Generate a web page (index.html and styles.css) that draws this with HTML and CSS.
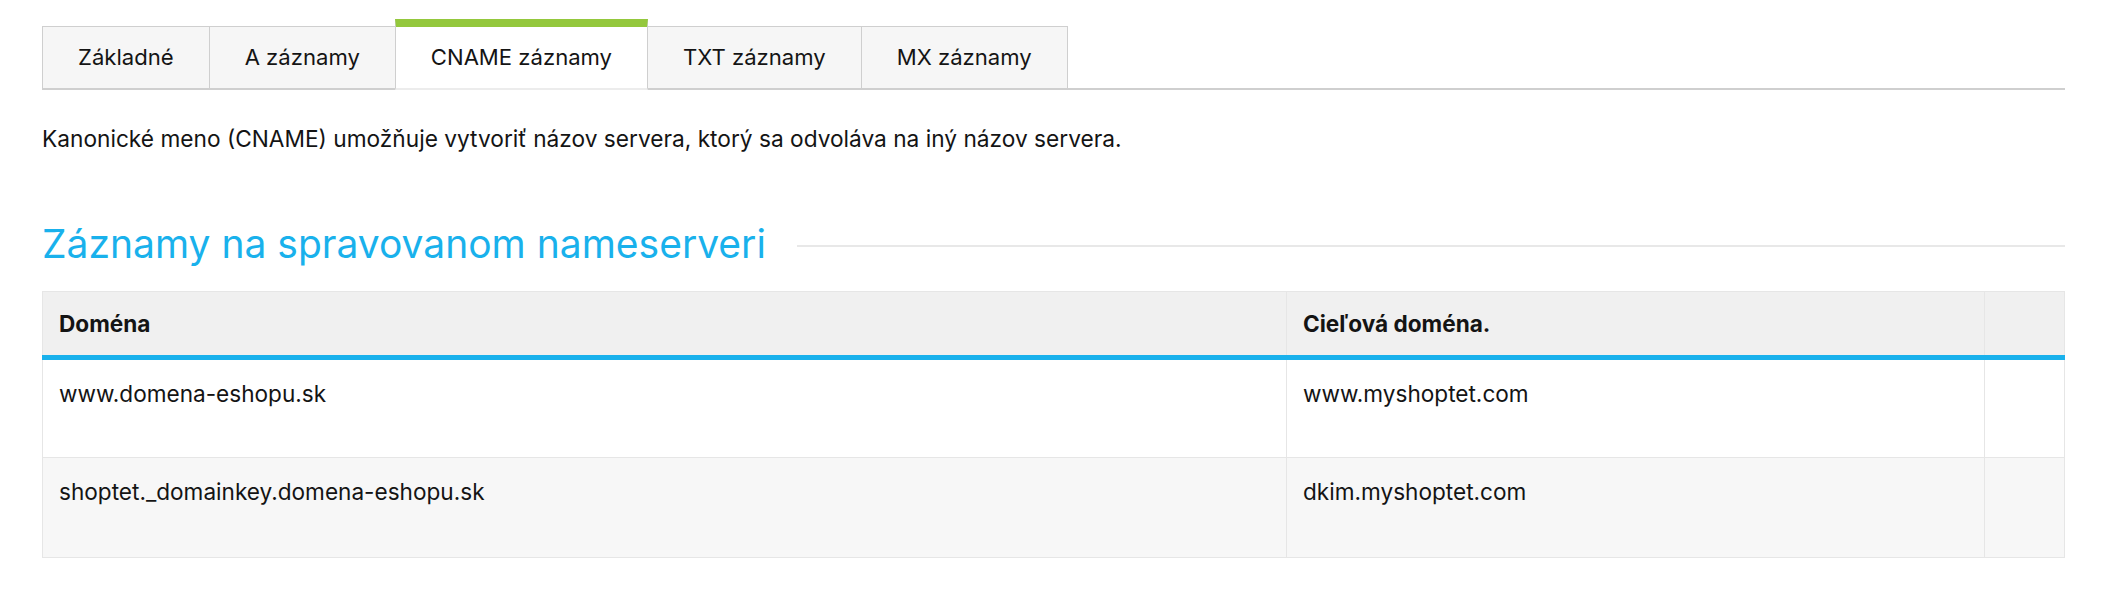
FILE: index.html
```html
<!DOCTYPE html>
<head>
    <title>DNS záznamy</title>
    <link rel="stylesheet" href="styles.css">
</head>
<body>

<div class="page">
    <ul class="tabs">
        <li class="tab">Základné</li>
        <li class="tab">A záznamy</li>
        <li class="tab active">CNAME záznamy</li>
        <li class="tab">TXT záznamy</li>
        <li class="tab">MX záznamy</li>
    </ul>

    <p class="intro">Kanonické meno (CNAME) umožňuje vytvoriť názov servera, ktorý sa odvoláva na iný názov servera.</p>

    <h2 class="section-title">Záznamy na spravovanom nameserveri</h2>

    <table class="records">
        <colgroup>
            <col class="col-domain">
            <col class="col-target">
            <col class="col-actions">
        </colgroup>
        <thead>
            <tr>
                <th>Doména</th>
                <th>Cieľová doména.</th>
                <th></th>
            </tr>
        </thead>
        <tbody>
            <tr>
                <td>www.domena-eshopu.sk</td>
                <td>www.myshoptet.com</td>
                <td></td>
            </tr>
            <tr>
                <td>shoptet._domainkey.domena-eshopu.sk</td>
                <td>dkim.myshoptet.com</td>
                <td></td>
            </tr>
        </tbody>
    </table>
</div>

</body>
</html>
```

FILE: styles.css
```css
body {
    margin: 0;
    background: #fff;
    color: #141414;
    font-family: Inter, 'Noto Sans', sans-serif;
}
.page {
    padding: 19px 42px 0;
}
.tabs {
    display: flex;
    align-items: flex-end;
    list-style: none;
    margin: 0;
    padding: 0;
    border-bottom: 2px solid #cfcfcf;
}
.tab {
    line-height: 61px;
    padding: 0 35px;
    font-size: 22.1px;
    background: #f6f6f6;
    border: 1px solid #cfcfcf;
    border-bottom: none;
    margin-left: -1px;
}
.tab:first-child {
    margin-left: 0;
}
.tab.active {
    background: #fff;
    border-top: 8px solid #94c83d;
    margin-bottom: -2px;
    border-bottom: 2px solid #ececec;
    position: relative;
}
.intro {
    margin: 34px 0 0;
    font-size: 22.7px;
    line-height: 30px;
}
.section-title {
    display: flex;
    align-items: center;
    gap: 31px;
    margin: 65px 0 0;
    font-size: 39px;
    font-weight: 400;
    line-height: 49px;
    color: #19b1ec;
}
.section-title::after {
    content: '';
    flex: 1;
    height: 2px;
    background: #e8e8e8;
    margin-top: 4px;
}
.records {
    width: 100%;
    margin-top: 23px;
    border-collapse: collapse;
    table-layout: fixed;
    border: 1px solid #e6e6e6;
    font-size: 22.6px;
}
.col-target {
    width: 698px;
}
.col-actions {
    width: 80px;
}
.records thead tr {
    height: 66px;
}
.records th {
    padding: 0 16px;
    text-align: left;
    font-weight: 700;
    background: #f0f0f0;
    border-left: 1px solid #e6e6e6;
    border-bottom: 5px solid #19b1ec;
}
.records tbody tr {
    height: 100px;
}
.records td {
    padding: 19px 16px 0;
    line-height: 30px;
    vertical-align: top;
    border-left: 1px solid #e6e6e6;
    border-bottom: 1px solid #e6e6e6;
}
.records tbody tr:nth-child(even) td {
    background: #f7f7f7;
}
```
